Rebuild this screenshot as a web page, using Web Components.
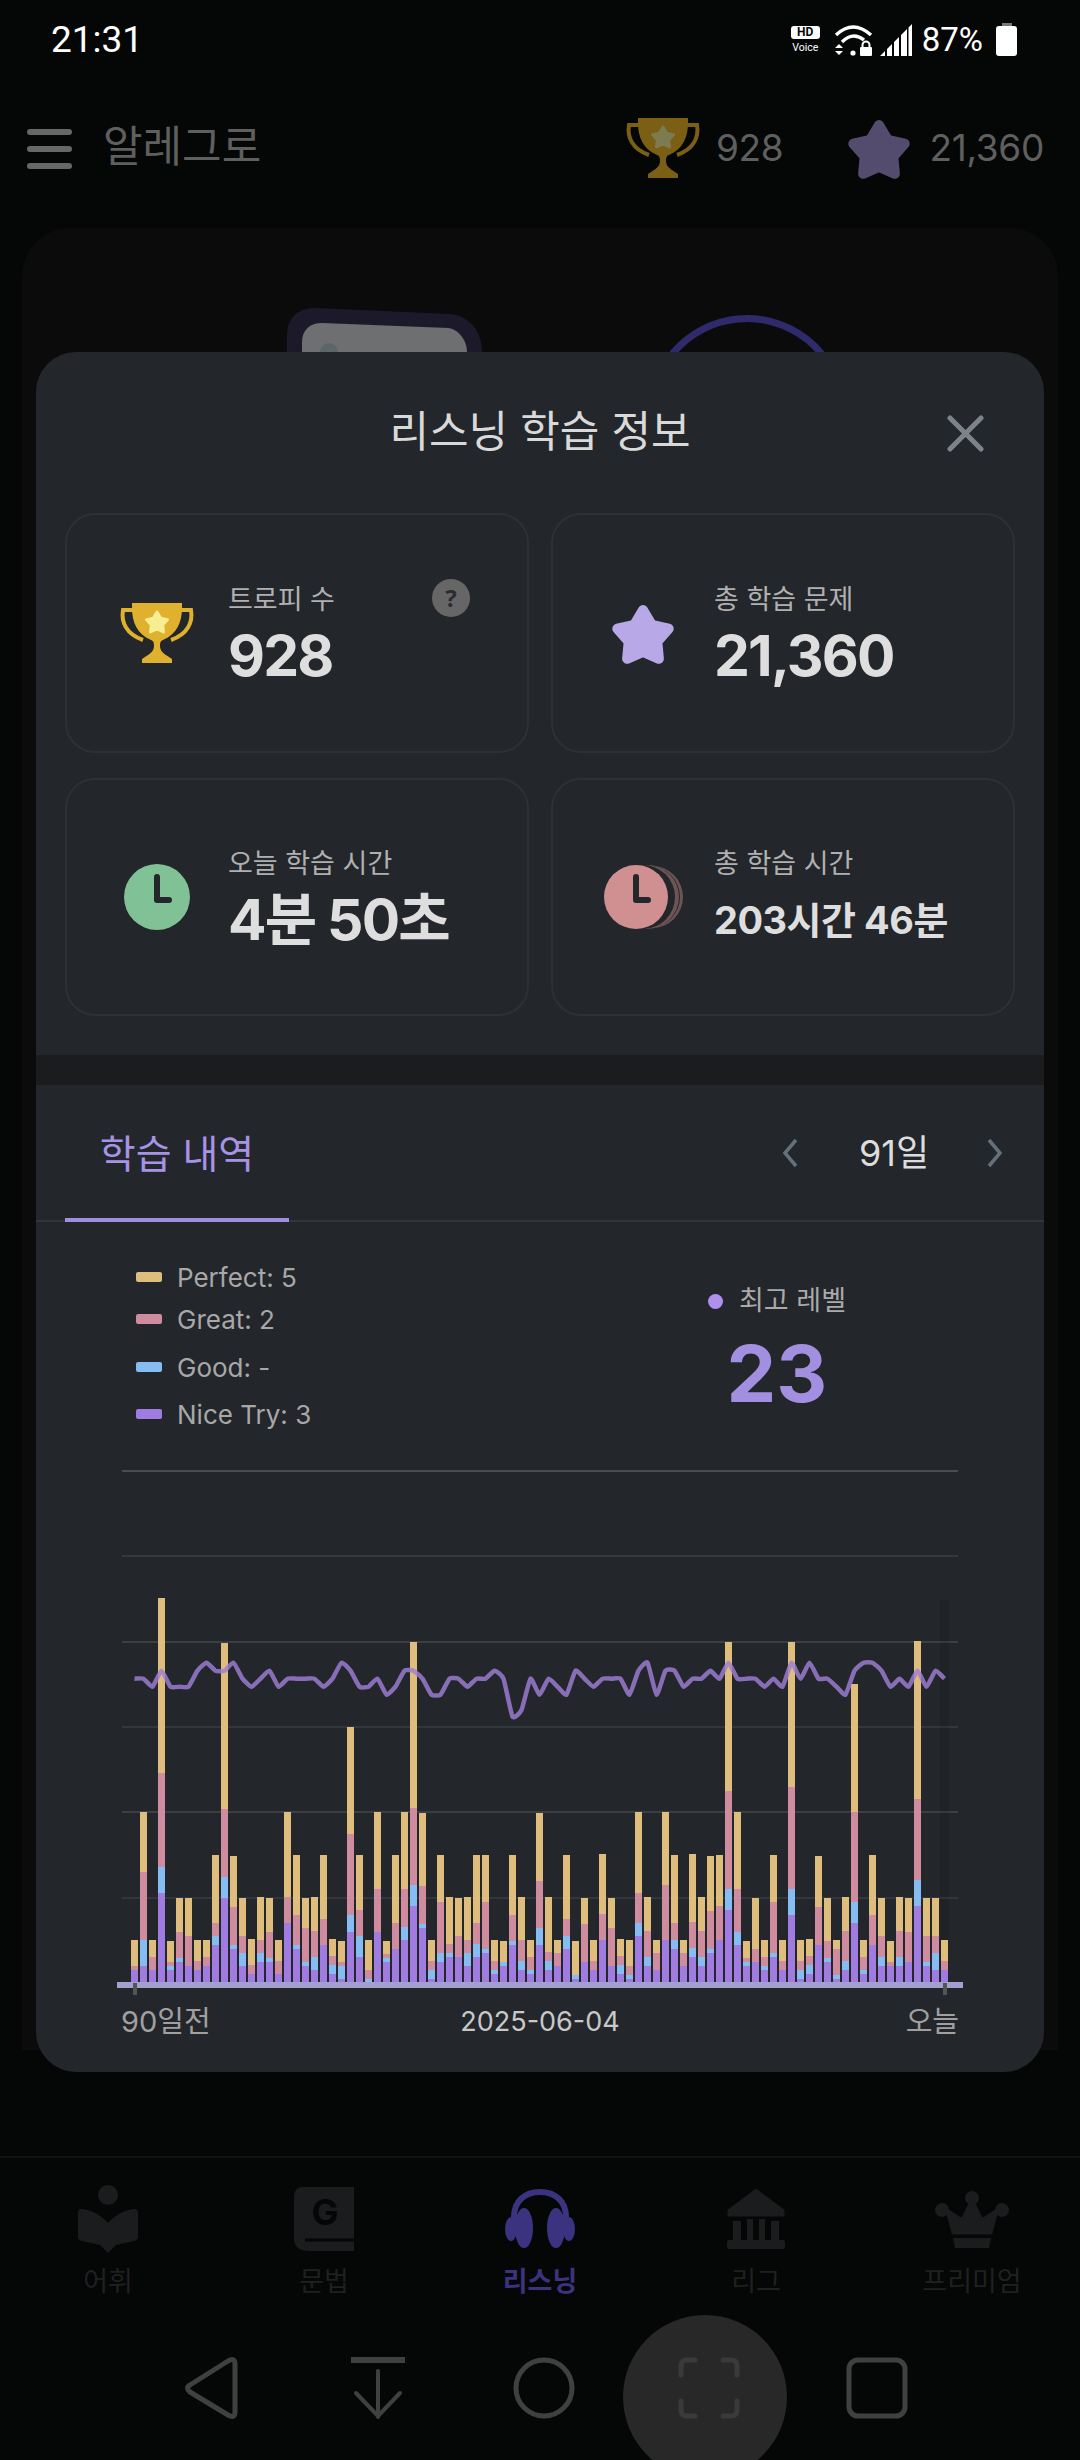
<!DOCTYPE html>
<html lang="ko">
<head>
<meta charset="utf-8">
<title>리스닝 학습 정보</title>
<style>
  html, body { margin: 0; padding: 0; background: #050606; }
  body { width: 1080px; height: 2460px; overflow: hidden; font-family: Inter, "Noto Sans CJK KR", "Noto Sans", sans-serif; }
</style>
</head>
<body>
<app-screen>
  <status-bar slot="under"></status-bar>
  <top-header slot="under"></top-header>
  <hero-backdrop slot="under"></hero-backdrop>
  <bottom-nav slot="under">
    <nav-item icon="vocab" label="어휘"></nav-item>
    <nav-item icon="grammar" label="문법"></nav-item>
    <nav-item icon="headphones" label="리스닝" active></nav-item>
    <nav-item icon="league" label="리그"></nav-item>
    <nav-item icon="crown" label="프리미엄"></nav-item>
  </bottom-nav>
  <sys-nav slot="under"></sys-nav>

  <info-modal slot="over" heading="리스닝 학습 정보">
    <stat-card slot="stats" label="트로피 수" value="928" help><app-icon name="trophy"></app-icon></stat-card>
    <stat-card slot="stats" label="총 학습 문제" value="21,360"><app-icon name="star"></app-icon></stat-card>
    <stat-card slot="stats" label="오늘 학습 시간" value="4분 50초"><app-icon name="clock"></app-icon></stat-card>
    <stat-card slot="stats" label="총 학습 시간" value="203시간 46분" small><app-icon name="clocks"></app-icon></stat-card>
    <history-tabs slot="history" tab="학습 내역" range="91일"></history-tabs>
    <chart-summary slot="history" level="23"></chart-summary>
    <study-chart slot="history"></study-chart>
  </info-modal>
</app-screen>

<script>
  // star outline, the fat round stroke is what makes it look chubby
  function starPoints(cx, cy, R, r) {
    const pts = [];
    for (let i = 0; i < 10; i++) {
      const a = -Math.PI / 2 + i * Math.PI / 5;
      const d = i % 2 ? r : R;
      pts.push((cx + d * Math.cos(a)).toFixed(1) + "," + (cy + d * Math.sin(a)).toFixed(1));
    }
    return pts.join(" ");
  }

  const ICONS = {
    trophy: { w: 76, h: 62, svg: c => `
      <path d="M15 8H4C2 20 7 32 24 38M61 8H72C74 20 69 32 52 38" fill="none" stroke="${c.a}" stroke-width="4"/>
      <path d="M13 1H63V6C63 20 58 32 44 38C41 39 41 42 41 44C41 49 45 52 50 55L53 57V61H23V57L26 55C31 52 35 49 35 44C35 42 35 39 32 38C18 32 13 20 13 6Z" fill="${c.a}"/>
      <polygon points="${starPoints(38, 21, 11, 6)}" fill="${c.b}" stroke="${c.b}" stroke-width="3" stroke-linejoin="round"/>` },
    star: { w: 64, h: 62, svg: c => `
      <polygon points="${starPoints(32, 35, 27, 15)}" fill="${c.a}" stroke="${c.a}" stroke-width="10" stroke-linejoin="round"/>` },
    clock: { w: 78, h: 66, svg: () => `
      <circle cx="39" cy="33" r="33" fill="#80c196"/>
      <path d="M39 13V36H51" fill="none" stroke="#23262a" stroke-width="6" stroke-linecap="round" stroke-linejoin="round"/>` },
    clocks: { w: 82, h: 66, svg: () => `
      <circle cx="50" cy="33" r="31" fill="#6d5456"/>
      <circle cx="47" cy="33" r="31" fill="#23262a"/>
      <circle cx="45" cy="33" r="32" fill="#6d5456"/>
      <circle cx="41" cy="33" r="32" fill="#23262a"/>
      <circle cx="34" cy="33" r="32" fill="#d08f91"/>
      <path d="M34 13V36H46" fill="none" stroke="#23262a" stroke-width="6" stroke-linecap="round" stroke-linejoin="round"/>` },
    vocab: { w: 60, h: 68, svg: c => `
      <circle cx="30" cy="10" r="10" fill="${c.a}"/>
      <path d="M3 24C11 24 22 29 30 38C38 29 49 24 57 24Q60 24 60 28V52Q60 55 56 56L38 60L30 68L22 60L4 56Q0 55 0 52V28Q0 24 3 24Z" fill="${c.a}"/>` },
    grammar: { w: 60, h: 64, svg: c => `
      <path d="M9 0H60V64H14C5 64 0 59 0 52V10C0 4 3 0 9 0Z" fill="${c.a}"/>
      <path d="M11 53H60" stroke="#050606" stroke-width="3"/>
      <text x="31" y="38" text-anchor="middle" font-size="36" font-weight="700" fill="#050606">G</text>` },
    headphones: { w: 70, h: 60, svg: c => `
      <path d="M9 36V28C9 12 20 3 35 3C50 3 61 12 61 28V36" fill="none" stroke="${c.a}" stroke-width="6"/>
      <ellipse cx="19" cy="39" rx="9" ry="20" fill="${c.a}"/><ellipse cx="51" cy="39" rx="9" ry="20" fill="${c.a}"/>
      <ellipse cx="6" cy="40" rx="6" ry="12" fill="${c.a}"/><ellipse cx="64" cy="40" rx="6" ry="12" fill="${c.a}"/>` },
    league: { w: 58, h: 60, svg: c => `
      <path d="M29 0L57 21V27H1V21Z" fill="${c.a}" stroke="${c.a}" stroke-linejoin="round"/>
      <path d="M6 32H14V51H6ZM20 30H26V51H20ZM32 30H38V51H32ZM44 32H52V51H44Z" fill="${c.a}"/>
      <rect x="0" y="51" width="58" height="9" rx="2" fill="${c.a}"/>` },
    crown: { w: 74, h: 58, svg: c => `
      <circle cx="37" cy="8" r="7" fill="${c.a}"/><circle cx="7" cy="20" r="7" fill="${c.a}"/><circle cx="67" cy="20" r="7" fill="${c.a}"/>
      <path d="M37 10L47 30L62 20L56 43H18L12 20L27 30Z" fill="${c.a}" stroke="${c.a}" stroke-width="3" stroke-linejoin="round"/>
      <path d="M18 48H56L54 58H20Z" fill="${c.a}"/>` }
  };

  class AppIcon extends HTMLElement {
    constructor() {
      super();
      const icon = ICONS[this.getAttribute("name")];
      const colors = {
        a: this.getAttribute("color") || { trophy: "#e0b02f", star: "#b9a8e8" }[this.getAttribute("name")] || "#1b1c1d",
        b: this.getAttribute("accent") || "#f6ee90"
      };
      this.attachShadow({ mode: "open" }).innerHTML = `
        <style>:host { display: block; line-height: 0; } svg { display: block; overflow: visible; }</style>
        <svg width="${icon.w}" height="${icon.h}" viewBox="0 0 ${icon.w} ${icon.h}">${icon.svg(colors)}</svg>`;
    }
  }
  customElements.define("app-icon", AppIcon);

  // whole window: dimmed app underneath, sheet on top
  class AppScreen extends HTMLElement {
    constructor() {
      super();
      this.attachShadow({ mode: "open" }).innerHTML = `
        <style>
          :host { display: flex; flex-direction: column; position: relative; width: 1080px; height: 2460px; overflow: hidden; background: #050606; }
          .over { position: absolute; left: 36px; top: 352px; width: 1008px; }
        </style>
        <slot name="under"></slot>
        <div class="over"><slot name="over"></slot></div>`;
    }
  }
  customElements.define("app-screen", AppScreen);

  class StatusBar extends HTMLElement {
    constructor() {
      super();
      this.attachShadow({ mode: "open" }).innerHTML = `
        <style>
          :host { display: flex; align-items: center; height: 76px; padding: 3px 63px 0 51px; box-sizing: border-box; color: #fff; font-family: Roboto, sans-serif; flex: none; }
          .time { font-size: 37px; line-height: 76px; margin-right: auto; }
          .hd { display: flex; flex-direction: column; align-items: center; width: 29px; }
          .hd b { display: block; width: 29px; height: 13px; border-radius: 3px; background: #fff; color: #050606; font-size: 12px; line-height: 13px; text-align: center; }
          .hd span { font-size: 10.5px; line-height: 13px; margin-top: 2px; }
          svg { display: block; }
          .wifi { margin-left: 14px; } .signal { margin-left: 7px; }
          .pct { font-size: 33px; line-height: 76px; margin-left: 10px; }
          .batt { margin-left: 13px; }
        </style>
        <span class="time">21:31</span>
        <div class="hd"><b>HD</b><span>Voice</span></div>
        <svg class="wifi" width="39" height="32" viewBox="0 0 39 32" fill="none" stroke="#fff" stroke-width="3.4">
          <path d="M2 11Q19 -5 37 11"/><path d="M8 18Q19 7 30 16"/>
          <circle cx="19" cy="29" r="2.6" fill="#fff" stroke="none"/>
          <path d="M1 24H9L5 20ZM1 27H9L5 31Z" fill="#fff" stroke="none"/>
          <path d="M28.5 23V21A3.5 3.5 0 0 1 35.500 21V23" stroke-width="2"/>
          <rect x="26" y="23" width="12" height="9" rx="1" fill="#fff" stroke="none"/>
        </svg>
        <svg class="signal" width="32" height="32" viewBox="0 0 32 32" fill="#fff">
          <path d="M0 32L5 27V32ZM7 32V25L12 20V32ZM14 32V18L19 13V32ZM21 32V11L27 5V32ZM28.500 32V3.500L32 0V32Z"/>
        </svg>
        <span class="pct">87%</span>
        <svg class="batt" width="21" height="33" viewBox="0 0 21 33">
          <rect x="6" y="0" width="10" height="5" fill="#777"/>
          <rect x="0" y="3" width="21" height="30" rx="3" fill="#fff"/>
        </svg>`;
    }
  }
  customElements.define("status-bar", StatusBar);

  class TopHeader extends HTMLElement {
    constructor() {
      super();
      this.attachShadow({ mode: "open" }).innerHTML = `
        <style>
          :host { display: flex; align-items: center; height: 152px; padding: 0 36px 0 27px; box-sizing: border-box; flex: none; color: #5f5f5f; }
          .burger { display: flex; flex-direction: column; gap: 11px; width: 45px; margin-top: -6px; }
          .burger i { display: block; height: 6px; border-radius: 3px; background: #676767; }
          .name { font-size: 43px; line-height: 60px; margin-left: 31px; margin-top: -12px; margin-right: auto; }
          .num { font-size: 37px; letter-spacing: -0.3px; line-height: 60px; margin-top: -8px; }
          .n1 { margin-left: 15px; } .n2 { margin-left: 18px; }
          .star { margin-left: 64px; margin-top: -8px; } .cup { margin-top: -8px; }
        </style>
        <div class="burger"><i></i><i></i><i></i></div>
        <span class="name">알레그로</span>
        <app-icon class="cup" name="trophy" color="#7a5f14" accent="#7d7c50"></app-icon>
        <span class="num n1">928</span>
        <app-icon class="star" name="star" color="#544c6e"></app-icon>
        <span class="num n2">21,360</span>`;
    }
  }
  customElements.define("top-header", TopHeader);

  // the lesson card behind the sheet, only its top shows
  class HeroBackdrop extends HTMLElement {
    constructor() {
      super();
      this.attachShadow({ mode: "open" }).innerHTML = `
        <style>
          :host { display: block; flex: 1; margin: 0 22px 106px; position: relative; background: #0b0b0c; border-radius: 48px 48px 0 0; }
          svg { position: absolute; left: 0; top: 0; }
        </style>
        <svg width="1036" height="200" viewBox="22 228 1036 200">
          <path d="M287 360V335C287 318 298 308 315 308L450 314C470 316 482 332 482 352V360Z" fill="#1c1a2a"/>
          <path d="M302 360V342C302 330 310 323 322 323L448 328C458 329 467 340 467 352V360Z" fill="#6e6f70"/>
          <circle cx="329" cy="352" r="9" fill="#5c666a"/>
          <circle cx="747" cy="415" r="96.500" fill="none" stroke="#2f2a6b" stroke-width="7"/>
        </svg>`;
    }
  }
  customElements.define("hero-backdrop", HeroBackdrop);

  class NavItem extends HTMLElement {
    constructor() {
      super();
      const active = this.hasAttribute("active");
      this.attachShadow({ mode: "open" }).innerHTML = `
        <style>
          :host { display: flex; flex-direction: column; align-items: center; width: 216px; }
          .ico { height: 68px; display: flex; align-items: center; }
          .lbl { font-size: 27px; line-height: 40px; margin-top: 9px; color: ${active ? "#3b337f" : "#1f2021"}; font-weight: ${active ? 700 : 400}; }
        </style>
        <div class="ico"><app-icon name="${this.getAttribute("icon")}" color="${active ? "#3b337f" : "#1b1c1d"}"></app-icon></div>
        <span class="lbl">${this.getAttribute("label")}</span>`;
    }
  }
  customElements.define("nav-item", NavItem);

  class BottomNav extends HTMLElement {
    constructor() {
      super();
      this.attachShadow({ mode: "open" }).innerHTML = `
        <style>
          :host { display: flex; height: 160px; flex: none; box-sizing: border-box; border-top: 2px solid #101112; padding-top: 27px; background: #050606; }
        </style>
        <slot></slot>`;
    }
  }
  customElements.define("bottom-nav", BottomNav);

  class SysNav extends HTMLElement {
    constructor() {
      super();
      this.attachShadow({ mode: "open" }).innerHTML = `
        <style>
          :host { display: flex; height: 144px; flex: none; padding-left: 129px; padding-top: 40px; box-sizing: border-box; }
          .b { width: 166px; height: 64px; display: flex; justify-content: center; align-items: center; position: relative; }
          .b.shot { width: 164px; margin-right: 3px; }
          .halo { position: absolute; left: -4px; top: -41px; width: 164px; height: 164px; border-radius: 50%; background: #282828; }
          svg { display: block; position: relative; fill: none; stroke: #404040; stroke-width: 5; stroke-linejoin: round; stroke-linecap: round; }
        </style>
        <div class="b"><svg width="56" height="62" viewBox="0 0 56 62"><path d="M6 28L44 4Q51 0 51 7V55Q51 62 44 58L6 35Q1 31 6 28Z"/></svg></div>
        <div class="b"><svg width="56" height="62" viewBox="0 0 56 62"><path d="M1 3H55" stroke-width="6" stroke-linecap="butt"/><path d="M28 14V60M6 36L28 59L50 36" stroke-width="4"/></svg></div>
        <div class="b"><svg width="62" height="62" viewBox="0 0 62 62"><circle cx="31" cy="31" r="28"/></svg></div>
        <div class="b shot"><div class="halo"></div><svg width="62" height="62" viewBox="0 0 62 62" style="stroke:#3a3a3a"><path d="M3 18V9Q3 3 9 3H17M45 3H53Q59 3 59 9V18M59 44V53Q59 59 53 59H45M17 59H9Q3 59 3 53V44"/></svg></div>
        <div class="b"><svg width="62" height="62" viewBox="0 0 62 62"><rect x="3" y="3" width="56" height="56" rx="9"/></svg></div>`;
    }
  }
  customElements.define("sys-nav", SysNav);

  class InfoModal extends HTMLElement {
    constructor() {
      super();
      this.attachShadow({ mode: "open" }).innerHTML = `
        <style>
          :host { display: block; background: #23262a; border-radius: 40px; height: 1720px; overflow: hidden; }
          .head { position: relative; height: 161px; display: flex; justify-content: center; padding-top: 49px; box-sizing: border-box; }
          h2 { margin: 0; font-size: 43px; font-weight: 400; line-height: 60px; color: #d9d9d9; }
          .close { position: absolute; left: 911px; top: 63px; }
          .stats { display: grid; grid-template-columns: 464px 464px; grid-template-rows: 240px 238px; gap: 25px 22px; padding: 0 29px; }
          .divider { height: 30px; margin-top: 39px; background: #1a1c1e; }
        </style>
        <div class="head">
          <h2>${this.getAttribute("heading")}</h2>
          <svg class="close" width="37" height="37" viewBox="0 0 37 37"><path d="M3 3L34 34M34 3L3 34" stroke="#7d8489" stroke-width="5" stroke-linecap="round"/></svg>
        </div>
        <div class="stats"><slot name="stats"></slot></div>
        <div class="divider"></div>
        <slot name="history"></slot>`;
    }
  }
  customElements.define("info-modal", InfoModal);

  class StatCard extends HTMLElement {
    constructor() {
      super();
      const small = this.hasAttribute("small");
      this.attachShadow({ mode: "open" }).innerHTML = `
        <style>
          :host { display: flex; align-items: center; position: relative; box-sizing: border-box; border: 2px solid #2e3034; border-radius: 30px; }
          .ico { width: 78px; margin-left: 51px; flex: none; display: flex; justify-content: center; }
          ::slotted(app-icon) { flex: none; }
          .txt { margin-left: 32px; margin-top: 1px; }
          .lbl { font-size: 27px; line-height: 36px; color: #b0b0b0; }
          .val { font-size: ${small ? 38 : 57}px; font-weight: 700; letter-spacing: ${small ? -0.5 : -1.8}px; line-height: 60px; margin-top: 8px; color: #dedede; white-space: nowrap; }
          .help { position: absolute; left: 365px; top: 64px; width: 38px; height: 38px; border-radius: 50%; background: #666; color: #2a2c2f; font: 700 24px/38px "Noto Sans", sans-serif; text-align: center; }
        </style>
        <div class="ico"><slot></slot></div>
        <div class="txt">
          <div class="lbl">${this.getAttribute("label")}</div>
          <div class="val">${this.getAttribute("value")}</div>
        </div>
        ${this.hasAttribute("help") ? '<div class="help">?</div>' : ""}`;
    }
  }
  customElements.define("stat-card", StatCard);

  class HistoryTabs extends HTMLElement {
    constructor() {
      super();
      this.attachShadow({ mode: "open" }).innerHTML = `
        <style>
          :host { display: flex; align-items: center; height: 137px; box-sizing: border-box; border-bottom: 2px solid #33353a; padding: 0 41px 0 29px; }
          .tab { width: 224px; height: 137px; box-sizing: border-box; border-bottom: 4px solid #a08fe0; margin-bottom: -2px; text-align: center; font-size: 39px; line-height: 138px; color: #a793e5; }
          .pager { margin-left: auto; display: flex; align-items: center; }
          .range { width: 189px; padding-left: 3px; box-sizing: border-box; text-align: center; font-size: 36px; line-height: 62px; color: #ddd; }
          svg { display: block; }
        </style>
        <div class="tab">${this.getAttribute("tab")}</div>
        <div class="pager">
          <svg width="16" height="30" viewBox="0 0 16 30"><path d="M14 2L3 15L14 28" fill="none" stroke="#64717a" stroke-width="3.500"/></svg>
          <span class="range">${this.getAttribute("range")}</span>
          <svg width="16" height="30" viewBox="0 0 16 30"><path d="M2 2L13 15L2 28" fill="none" stroke="#64717a" stroke-width="3.500"/></svg>
        </div>`;
    }
  }
  customElements.define("history-tabs", HistoryTabs);

  class ChartSummary extends HTMLElement {
    constructor() {
      super();
      const rows = [["Perfect: 5", "#dfbd7c"], ["Great: 2", "#cf8c9f"], ["Good: -", "#85bdf2"], ["Nice Try: 3", "#a07ce0"]];
      this.attachShadow({ mode: "open" }).innerHTML = `
        <style>
          :host { display: flex; height: 238px; }
          .legend { flex: 0 0 541px; padding: 35px 0 0 100px; }
          .row { display: flex; align-items: center; height: 40px; font-size: 26px; color: #a8a8a8; }
          .row:nth-child(2) { margin-top: 2px; } .row:nth-child(3) { margin-top: 8px; } .row:nth-child(4) { margin-top: 7px; }
          .row i { width: 26px; height: 10px; border-radius: 2px; margin-right: 15px; }
          .level { width: 200px; display: flex; flex-direction: column; align-items: center; padding-top: 61px; }
          .cap { display: flex; align-items: center; font-size: 27px; line-height: 36px; color: #aaa; }
          .cap i { width: 15px; height: 15px; border-radius: 50%; background: #b08fee; margin-right: 16px; }
          .lv { font-size: 79px; font-weight: 700; line-height: 100px; margin-top: 4px; color: #a28fe0; }
        </style>
        <div class="legend">${rows.map(r => `<div class="row"><i style="background:${r[1]}"></i>${r[0]}</div>`).join("")}</div>
        <div class="level">
          <div class="cap"><i></i>최고 레벨</div>
          <div class="lv">${this.getAttribute("level")}</div>
        </div>`;
    }
  }
  customElements.define("chart-summary", ChartSummary);

  // tops of the stacked segments, measured in 3x px from y=1560: yellow, pink, blue, purple (blue 0 = no blue part)
  const BARS = [
    [1140,1218,0,1230],[756,936,1140,1218],[1140,1191,0,1230],[114,639,921,999],[1143,1206,1218,1230],
    [1014,1116,1194,1206],[1014,1128,0,1218],[1140,1203,0,1230],[1140,1191,0,1218],[885,1089,1128,1155],
    [249,747,951,1014],[888,1041,1155,1167],[1014,1128,1179,1218],[1137,1215,0,1242],[1011,1140,1179,1206],
    [1014,1116,1194,1206],[1140,1203,0,1242],[756,1011,0,1089],[885,1065,1155,1167],[1014,1104,1206,1218],
    [1011,1113,1191,1230],[885,1077,0,1155],[1137,1188,1215,1242],[1143,1206,1218,1257],[501,822,1065,1116],
    [885,1050,1128,1191],[1140,1230,1257,1268],[756,987,0,1116],[1143,1182,1194,1206],[885,1089,0,1167],
    [756,987,1101,1140],[245,744,975,1038],[759,978,1092,1104],[1140,1203,1230,1257],[885,1026,1179,1206],
    [1011,1152,1179,1191],[1014,1128,0,1191],[1011,1140,1179,1218],[885,1089,1152,1191],[885,1026,1167,1179],
    [1140,1203,1230,1242],[1143,1206,1206,1218],[885,1065,1143,1155],[1011,1140,1203,1230],[1140,1191,1230,1242],
    [759,963,1104,1155],[1011,1176,1203,1230],[1140,1179,0,1218],[885,1077,1128,1167],[1143,1245,1245,1257],
    [1014,1092,0,1206],[1140,1203,0,1230],[882,1062,0,1140],[1014,1104,0,1218],[1137,1188,1215,1242],
    [1140,1218,1245,1257],[756,999,1089,1128],[1011,1113,1191,1218],[1140,1179,0,1230],[756,975,0,1140],
    [885,1089,1140,1167],[1140,1179,0,1218],[882,1086,1164,1191],[1011,1113,1191,1218],[888,1053,1167,1179],
    [885,1038,0,1140],[245,693,987,1050],[756,987,1116,1155],[1143,1194,1206,1218],[1014,1167,0,1206],
    [1140,1191,1218,1230],[885,1026,1179,1191],[1140,1203,0,1230],[245,681,987,1065],[1140,1203,1230,1257],
    [1137,1188,1215,1242],[888,1041,0,1155],[1014,1143,1194,1206],[1140,1167,1245,1257],[1011,1113,1203,1230],
    [372,756,1026,1089],[1140,1191,1230,1242],[885,1065,0,1155],[1014,1128,1191,1218],[1143,1206,0,1218],
    [1011,1113,1191,1218],[1014,1116,0,1206],[243,717,960,1038],[1014,1128,1206,1218],[1014,1128,1179,1230],
    [1140,1203,0,1230]
  ];
  const LEVELS = [
    356,356,380,332,380,380,380,332,308,332,332,308,356,380,356,332,380,356,356,356,356,380,356,308,332,380,380,356,404,380,
    332,332,356,404,404,356,356,380,356,356,332,356,470,450,356,404,356,380,404,332,356,380,356,356,356,404,332,308,404,332,
    332,380,356,356,332,356,308,356,356,356,380,356,380,308,356,308,356,356,380,404,332,308,308,332,380,356,380,332,380,332,356
  ];

  class StudyChart extends HTMLElement {
    constructor() {
      super();
      const Y = z => Math.round(1560 + z / 3);
      const BASE = 1983;
      let grid = "";
      [[1470, "#4a4d50"], [1555, "#36393c"], [1641, "#3c3f42"], [1726, "#33363a"], [1811, "#3c3f42"], [1897, "#33363a"]].forEach(g => {
        grid += `<rect x="122" y="${g[0]}" width="836" height="2" fill="${g[1]}"/>`;
      });
      let bars = "";
      BARS.forEach((b, i) => {
        const x = 131 + 9 * i;
        const seg = (top, color) => `<rect x="${x}" y="${Y(top)}" width="7" height="${BASE - Y(top)}" fill="${color}"/>`;
        bars += seg(b[0], "#dfbd7c") + seg(b[1], "#cf8c9f");
        if (b[2]) bars += seg(b[2], "#85bdf2");
        bars += seg(b[3], "#a07ce0");
      });
      // slightly rounded line through the daily top level
      const pts = LEVELS.map((z, i) => [134.5 + 9 * i, 1560 + z / 3]);
      let d = `M${pts[0][0]} ${pts[0][1]}`;
      const t = 0.08;
      for (let i = 0; i < pts.length - 1; i++) {
        const p0 = pts[Math.max(i - 1, 0)], p1 = pts[i], p2 = pts[i + 1], p3 = pts[Math.min(i + 2, pts.length - 1)];
        d += `C${(p1[0] + (p2[0] - p0[0]) * t).toFixed(1)} ${(p1[1] + (p2[1] - p0[1]) * t).toFixed(1)} ${(p2[0] - (p3[0] - p1[0]) * t).toFixed(1)} ${(p2[1] - (p3[1] - p1[1]) * t).toFixed(1)} ${p2[0]} ${p2[1].toFixed(1)}`;
      }
      this.attachShadow({ mode: "open" }).innerHTML = `
        <style>
          :host { display: block; }
          svg { display: block; }
          .labels { display: grid; grid-template-columns: 1fr auto 1fr; padding: 5px 85px 0 85px; line-height: 34px; font-size: 29px; color: #a0a0a0; }
          .mid { color: #c8c8c8; font-size: 27px; } .end { text-align: right; }
        </style>
        <svg width="1008" height="540" viewBox="36 1460 1008 540">
          ${grid}
          <rect x="940" y="1600" width="9" height="385" fill="#000" opacity="0.08"/>
          ${bars}
          <path d="${d}" fill="none" stroke="#9f7fd6" stroke-opacity="0.82" stroke-width="4.500" stroke-linejoin="round"/>
          <rect x="117" y="1982" width="846" height="6" fill="#a3a0cf"/>
          <rect x="133" y="1983" width="4" height="12" fill="#555"/>
          <rect x="943" y="1983" width="4" height="12" fill="#555"/>
        </svg>
        <div class="labels"><span>90일전</span><span class="mid">2025-06-04</span><span class="end">오늘</span></div>`;
    }
  }
  customElements.define("study-chart", StudyChart);
</script>
</body>
</html>
